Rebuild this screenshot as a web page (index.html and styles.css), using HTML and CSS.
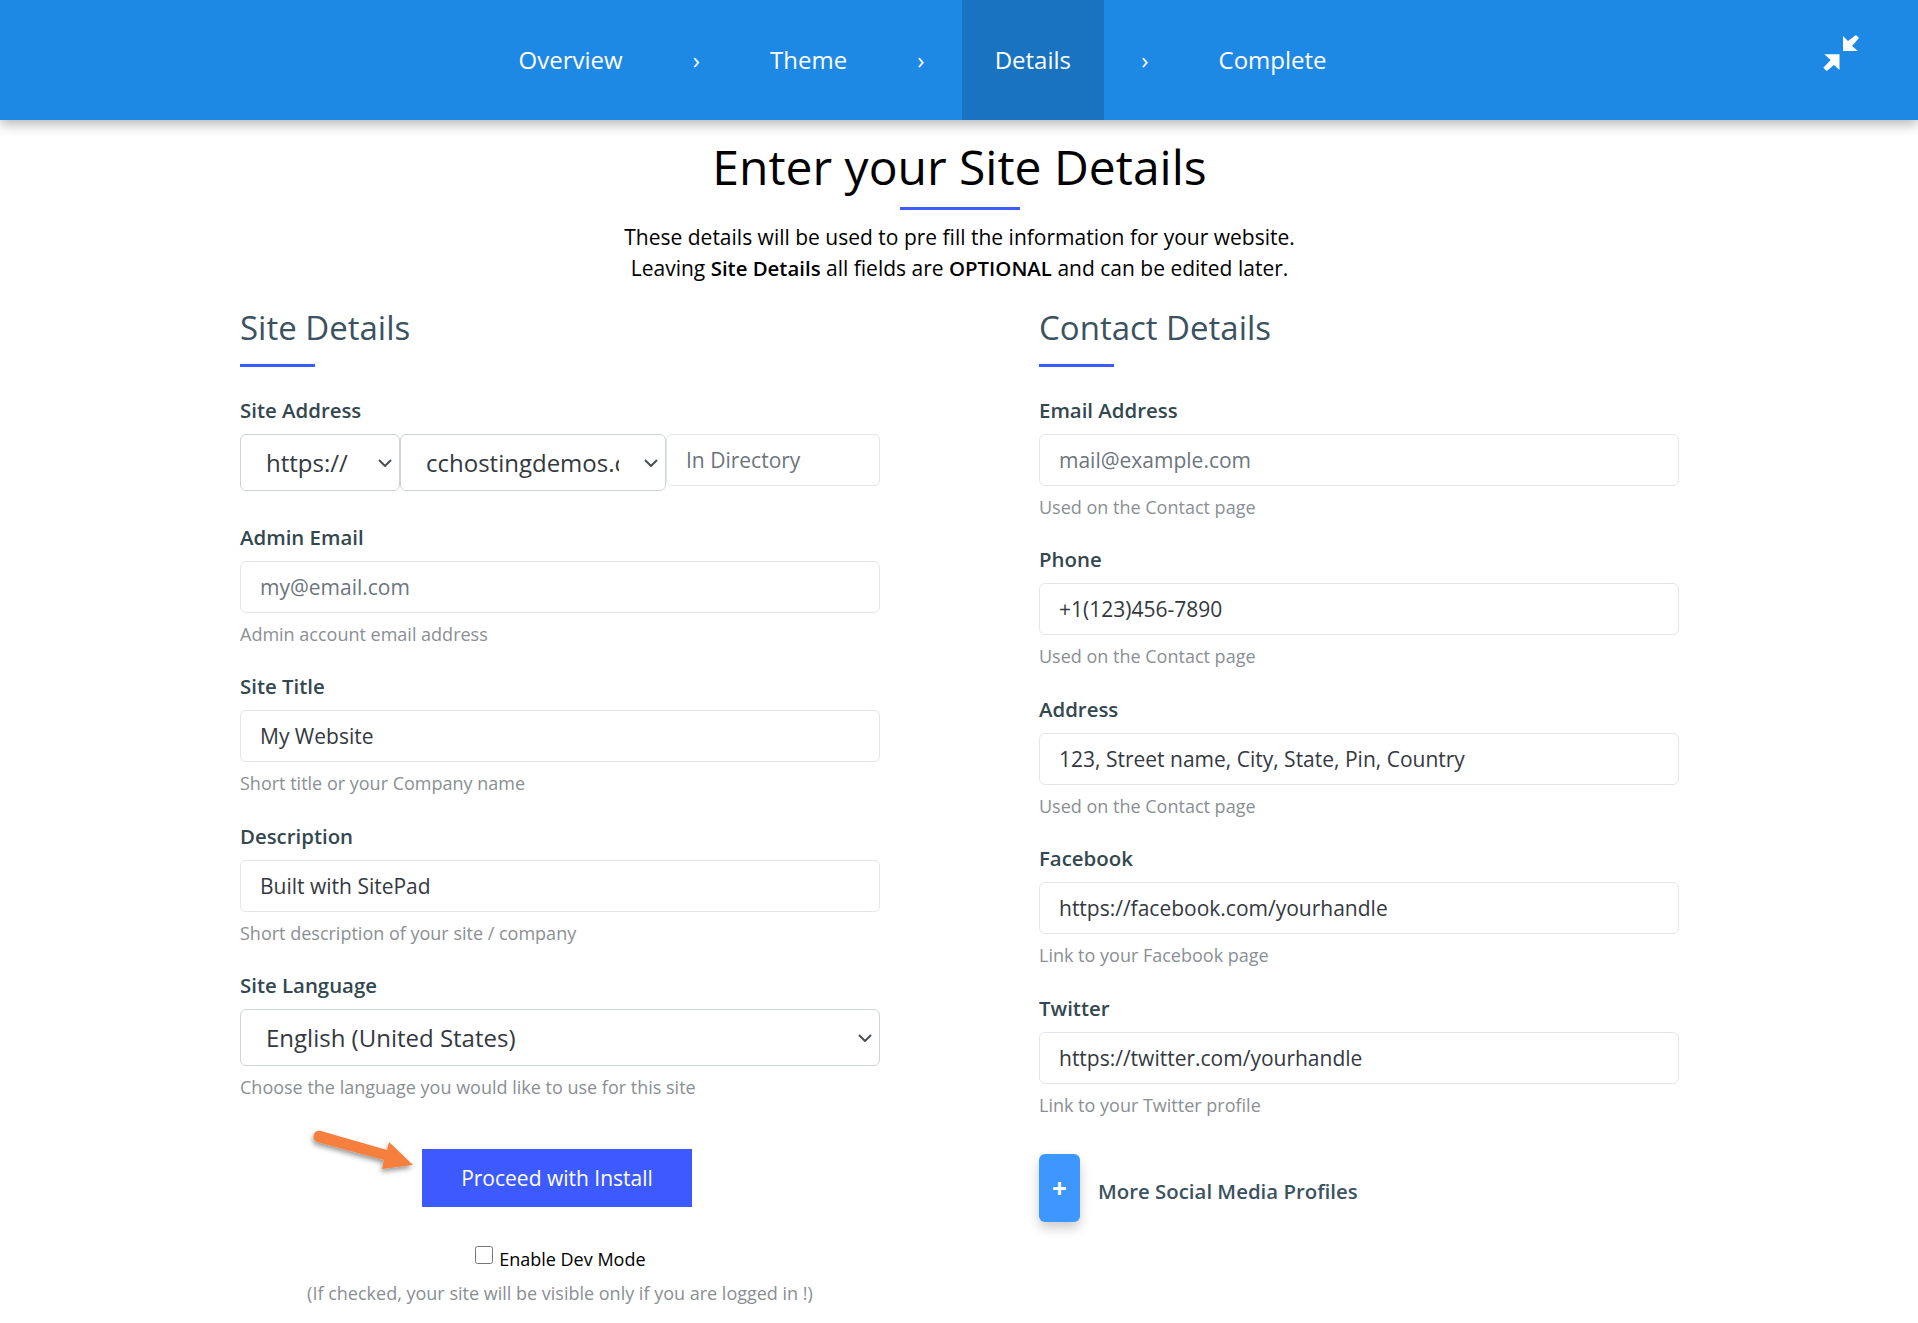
FILE: index.html
```html
<!DOCTYPE html>
<html lang="en">
<head>
<meta charset="utf-8">
<title>Enter your Site Details</title>
<link rel="stylesheet" href="styles.css">
</head>
<body>
<header class="topbar">
  <nav class="steps">
    <span class="step">Overview</span><span class="sep">›</span>
    <span class="step">Theme</span><span class="sep">›</span>
    <span class="step active">Details</span><span class="sep">›</span>
    <span class="step">Complete</span>
  </nav>
  <svg class="collapse" width="38" height="38" viewBox="0 0 38 38" aria-hidden="true">
    <path fill="#fff" d="M21 17V2L26 7L34 1L37 4L30 12L36 17Z"/>
    <path fill="#fff" d="M17.500 20.300V36L12 31L4.700 37L1.300 33.700L8.700 26L2.300 20.300Z"/>
  </svg>
</header>
<main class="page">
  <h1 class="title">Enter your Site Details</h1>
  <div class="rule"></div>
  <p class="intro">These details will be used to pre fill the information for your website.<br>Leaving <b>Site Details</b> all fields are <b>OPTIONAL</b> and can be edited later.</p>
  <div class="columns">
    <section class="col">
      <h2 class="heading">Site Details</h2>
      <div class="field field-address">
        <label class="label">Site Address</label>
        <div class="address">
          <select class="select proto"><option>https://</option></select>
          <select class="select domain"><option>cchostingdemos.com</option></select>
          <input class="input dir" placeholder="In Directory">
        </div>
      </div>
      <div class="field">
        <label class="label">Admin Email</label>
        <input class="input" placeholder="my@email.com">
        <div class="help">Admin account email address</div>
      </div>
      <div class="field">
        <label class="label">Site Title</label>
        <input class="input" value="My Website">
        <div class="help">Short title or your Company name</div>
      </div>
      <div class="field">
        <label class="label">Description</label>
        <input class="input" value="Built with SitePad">
        <div class="help">Short description of your site / company</div>
      </div>
      <div class="field">
        <label class="label">Site Language</label>
        <select class="select lang"><option>English (United States)</option></select>
        <div class="help">Choose the language you would like to use for this site</div>
      </div>
      <div class="actions">
        <div class="btn-wrap">
          <svg class="arrow" width="120" height="60" viewBox="0 0 120 60" aria-hidden="true">
            <defs><filter id="s" x="-20%" y="-30%" width="140%" height="170%"><feDropShadow dx="-1" dy="3" stdDeviation="2.500" flood-color="#000" flood-opacity=".4"/></filter></defs>
            <path filter="url(#s)" fill="#f77f3c" d="M17 8L83 27L85 19L109 42L78 46L80 37L13 19Q8 16 10 11Q12 7 17 8Z"/>
          </svg>
          <button class="btn" type="button">Proceed with Install</button>
        </div>
        <label class="dev"><input class="check" type="checkbox"> Enable Dev Mode</label>
        <div class="dev-note">(If checked, your site will be visible only if you are logged in !)</div>
      </div>
    </section>
    <section class="col">
      <h2 class="heading">Contact Details</h2>
      <div class="field">
        <label class="label">Email Address</label>
        <input class="input" placeholder="mail@example.com">
        <div class="help">Used on the Contact page</div>
      </div>
      <div class="field">
        <label class="label">Phone</label>
        <input class="input" value="+1(123)456-7890">
        <div class="help">Used on the Contact page</div>
      </div>
      <div class="field">
        <label class="label">Address</label>
        <input class="input" value="123, Street name, City, State, Pin, Country">
        <div class="help">Used on the Contact page</div>
      </div>
      <div class="field">
        <label class="label">Facebook</label>
        <input class="input" value="https://facebook.com/yourhandle">
        <div class="help">Link to your Facebook page</div>
      </div>
      <div class="field">
        <label class="label">Twitter</label>
        <input class="input" value="https://twitter.com/yourhandle">
        <div class="help">Link to your Twitter profile</div>
      </div>
      <div class="more">
        <button class="plus" type="button">+</button>
        <span class="more-text">More Social Media Profiles</span>
      </div>
    </section>
  </div>
</main>
</body>
</html>
```
FILE: styles.css
```css
* { box-sizing: border-box; }
html, body { margin: 0; padding: 0; }
body {
  font-family: "Open Sans", "Noto Sans", sans-serif;
  color: #000;
  background: #fff;
  height: 1323px;
  overflow: hidden;
}
.topbar {
  height: 120px;
  background: #1e88e5;
  display: flex;
  align-items: stretch;
  padding-left: 485.500px;
  padding-right: 58px;
  box-shadow: 0 4px 12px rgba(0, 0, 0, .3);
  color: #fff;
}
.steps { display: flex; align-items: stretch; }
.step {
  display: flex;
  align-items: center;
  padding: 0 33px 2px;
  font-size: 24px;
}
.step.active { background: #1a73c0; }
.sep {
  display: flex;
  align-items: center;
  justify-content: center;
  width: 81.500px;
  padding-bottom: 2px;
  font-size: 24px;
}
.collapse { margin-left: auto; align-self: center; margin-top: -14px; }
.page { width: 1440px; margin: 0 auto; padding-left: 1px; }
.title {
  margin: 0;
  padding-top: 17px;
  height: 87px;
  line-height: 60px;
  font-size: 48px;
  font-weight: 400;
  text-align: center;
}
.rule { width: 120px; height: 3px; margin: 0 auto; background: #3d5afe; }
.intro {
  margin: 12px 0 0;
  text-align: center;
  font-size: 21px;
  line-height: 31px;
}
.intro b { font-size: 20.400px; font-weight: 600; }
.columns { display: flex; gap: 159px; padding-top: 18px; }
.col { width: 640px; }
.heading {
  margin: 0 0 28px;
  height: 65px;
  line-height: 52px;
  font-size: 33px;
  font-weight: 400;
  color: #3b5261;
}
.heading::after {
  content: "";
  display: block;
  width: 75px;
  height: 3px;
  margin-top: 10px;
  background: #3d5afe;
}
.field { margin-bottom: 24.400px; }
.field-address { margin-bottom: 31px; }
.label {
  display: block;
  height: 30px;
  line-height: 30px;
  margin-bottom: 9px;
  font-size: 20.400px;
  font-weight: 600;
  color: #33474f;
}
.input {
  display: block;
  width: 100%;
  height: 52px;
  padding: 0 19px;
  border: 1px solid #e3e6ea;
  border-radius: 6px;
  font: 400 21px "Open Sans", sans-serif;
  color: #33393f;
  background: #fff;
}
.input::placeholder { color: #6c757d; opacity: 1; }
.help {
  margin-top: 8px;
  height: 26px;
  line-height: 26px;
  font-size: 18px;
  color: #8a8f94;
}
.select {
  display: block;
  height: 57px;
  padding: 0 46px 0 25px;
  border: 1px solid #ced4da;
  border-radius: 6px;
  font: 400 24px "Open Sans", sans-serif;
  color: #33393f;
  appearance: none;
  background: #fff url("data:image/svg+xml,%3Csvg xmlns='http://www.w3.org/2000/svg' width='14' height='8' viewBox='0 0 14 8'%3E%3Cpath d='M1 1l6 6 6-6' fill='none' stroke='%234a4f55' stroke-width='2'/%3E%3C/svg%3E") no-repeat right 7px center;
}
.address { display: flex; align-items: flex-start; }
.proto { width: 160px; }
.domain { width: 266px; }
.dir { width: 214px; }
.lang { width: 100%; }
.actions { text-align: center; padding-top: 24px; }
.btn-wrap { position: relative; display: flex; justify-content: center; padding-right: 6px; }
.btn {
  width: 270px;
  height: 58px;
  border: 0;
  background: #3d5afe;
  color: #fff;
  font: 400 21px "Open Sans", sans-serif;
}
.arrow { position: absolute; left: 64px; top: -26px; }
.dev {
  display: block;
  margin-top: 38px;
  height: 28px;
  line-height: 28px;
  font-size: 18px;
  color: #000;
}
.check { width: 18px; height: 18px; margin: 0 1px 0 1px; vertical-align: 2px; }
.dev-note {
  margin-top: 6px;
  line-height: 28px;
  font-size: 18px;
  color: #8a8f94;
}
.more { display: flex; align-items: center; gap: 18px; margin-top: 36px; }
.plus {
  width: 41px;
  height: 68px;
  padding: 0;
  border: 0;
  border-radius: 6px;
  background: #3d97ff;
  color: #fff;
  font: 700 26px "Open Sans", sans-serif;
  box-shadow: 0 6px 12px rgba(0, 0, 0, .2);
}
.more-text { margin-top: 6px; font-size: 20.400px; font-weight: 600; color: #3b5261; }
```
